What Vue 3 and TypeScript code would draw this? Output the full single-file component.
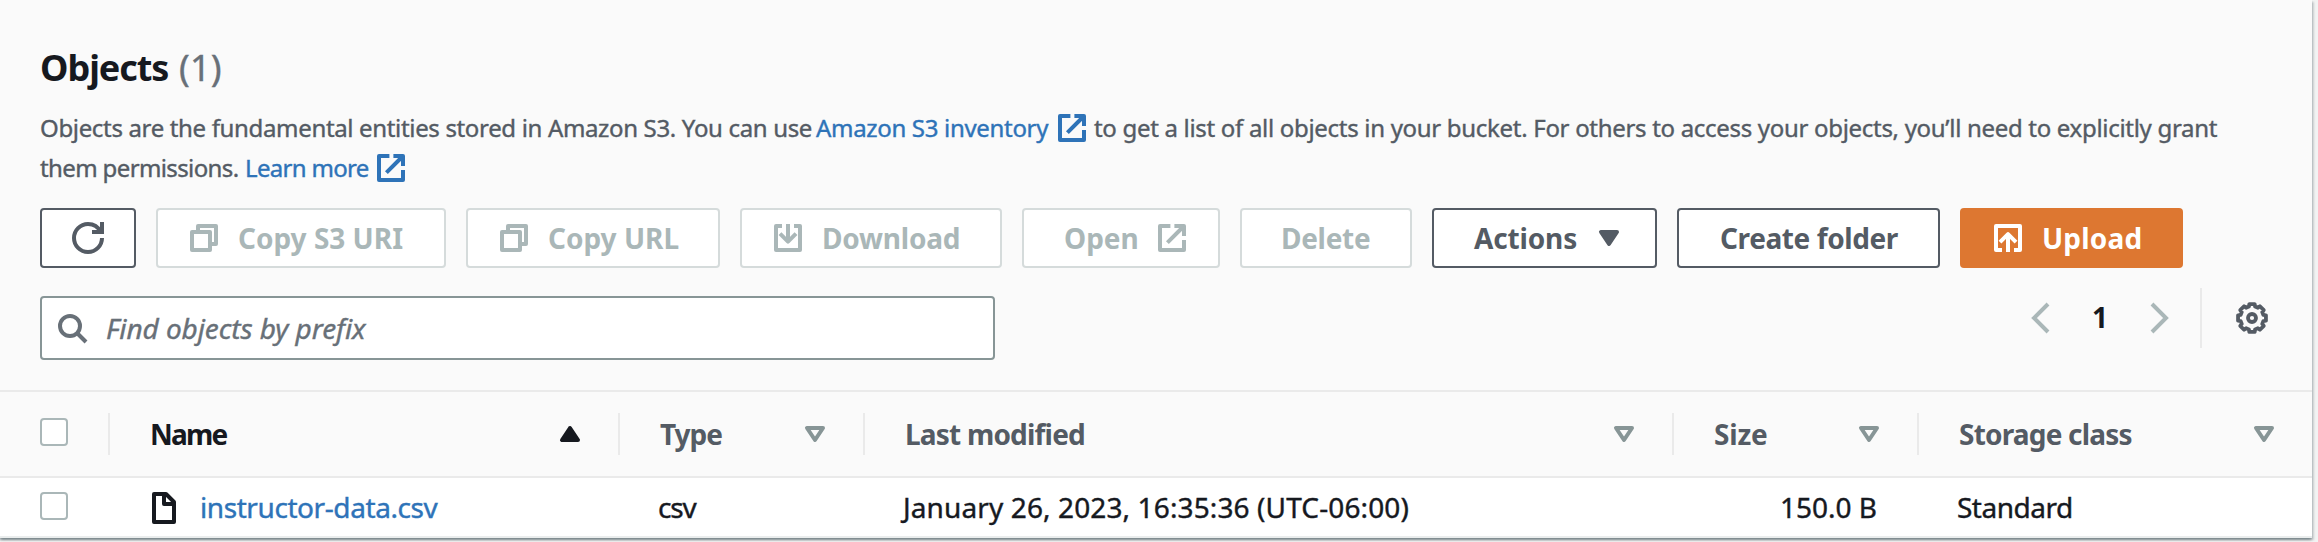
<script setup lang="ts">
interface ActionButton {
  id: string
  label: string
  icon?: string
  iconEnd?: string
  disabled?: boolean
  primary?: boolean
}

interface Column {
  id: string
  label: string
  sorted?: boolean
}

const buttons: ActionButton[] = [
  { id: 'copy-uri', label: 'Copy S3 URI', icon: 'copy', disabled: true },
  { id: 'copy-url', label: 'Copy URL', icon: 'copy', disabled: true },
  { id: 'download', label: 'Download', icon: 'download', disabled: true },
  { id: 'open', label: 'Open', iconEnd: 'external', disabled: true },
  { id: 'delete', label: 'Delete', disabled: true },
  { id: 'menu', label: 'Actions', iconEnd: 'caret' },
  { id: 'create', label: 'Create folder' },
  { id: 'upload', label: 'Upload', icon: 'upload', primary: true },
]

const columns: Column[] = [
  { id: 'name', label: 'Name', sorted: true },
  { id: 'type', label: 'Type' },
  { id: 'modified', label: 'Last modified' },
  { id: 'size', label: 'Size' },
  { id: 'storage', label: 'Storage class' },
]

const rows = [
  {
    name: 'instructor-data.csv',
    type: 'csv',
    modified: 'January 26, 2023, 16:35:36 (UTC-06:00)',
    size: '150.0 B',
    storage: 'Standard',
  },
]

// Stroked 16x16 icon outlines
const icons: Record<string, string> = {
  external: 'M9.2 2H14V7M5.7 10.3L14 2M14 9v5H2V2h5.2',
  copy: 'M2 5h9v9H2zM5 5V2h9v9h-3',
  download: 'M5 2H2v12h12V2h-3M8 1v8.5M4 5.8l4 4 4-4',
  upload: 'M5 14H2V2h12v12h-3M8 15V6.5M4 10.1l4-4 4 4',
}

// Eight-toothed gear outline
const gear = (() => {
  const steps: [number, number][] = [[-11, 7.1], [11, 7.1], [15, 5.9], [30, 5.9]]
  const pts: string[] = []
  for (let t = 0; t < 8; t++) {
    for (const [offset, radius] of steps) {
      const a = ((t * 45 + offset) * Math.PI) / 180
      pts.push(`${(8 + radius * Math.cos(a)).toFixed(2)} ${(8 + radius * Math.sin(a)).toFixed(2)}`)
    }
  }
  return `M${pts.join('L')}Z`
})()
</script>

<template>
  <section class="panel">
    <header class="head">
      <h2 class="title"><span class="title-text">Objects</span><span class="count">(1)</span></h2>
      <p class="desc">
        <span class="d-intro">Objects are the fundamental entities stored in Amazon S3. You can use</span>
        <a class="link d-inv">Amazon S3 inventory</a>
        <svg class="icon" viewBox="0 0 16 16"><path :d="icons.external" /></svg>
        <span class="d-rest">to get a list of all objects in your bucket. For others to access your objects, you’ll need to explicitly grant</span>
      </p>
      <p class="desc">
        <span class="d-perm">them permissions.</span>
        <a class="link d-more">Learn more</a>
        <svg class="icon" viewBox="0 0 16 16"><path :d="icons.external" /></svg>
      </p>

      <div class="actions">
        <button class="btn refresh" aria-label="Refresh">
          <svg class="icon miter" viewBox="0 0 16 16">
            <path d="M15 8c0 3.87-3.13 7-7 7s-7-3.13-7-7 3.13-7 7-7c2.79 0 5.2 1.63 6.33 4" />
            <path d="M10 5h5V0" />
          </svg>
        </button>
        <button
          v-for="b in buttons"
          :key="b.id"
          class="btn"
          :class="[b.id, { disabled: b.disabled, primary: b.primary }]"
        >
          <svg v-if="b.icon" class="icon" viewBox="0 0 16 16"><path :d="icons[b.icon]" /></svg>
          <span class="label">{{ b.label }}</span>
          <svg v-if="b.iconEnd === 'external'" class="icon" viewBox="0 0 16 16"><path :d="icons.external" /></svg>
          <svg v-else-if="b.iconEnd" class="icon solid" viewBox="0 0 16 16"><path d="M4 5h8l-4 6z" /></svg>
        </button>
      </div>

      <div class="tools">
        <div class="search">
          <svg class="icon miter" viewBox="0 0 16 16"><circle cx="7" cy="7" r="5" /><path d="M15 15l-4.5-4.5" /></svg>
          <span class="placeholder">Find objects by prefix</span>
        </div>
        <div class="pager">
          <svg class="icon miter arrow" viewBox="0 0 16 16"><path d="M12 1L5 8l7 7" /></svg>
          <span class="page">1</span>
          <svg class="icon miter arrow" viewBox="0 0 16 16"><path d="M4 1l7 7-7 7" /></svg>
          <span class="rule"></span>
          <svg class="icon settings" viewBox="0 0 16 16"><path :d="gear" /><circle cx="8" cy="8" r="2" /></svg>
        </div>
      </div>
    </header>

    <div class="grid thead">
      <div class="check"><span class="box"></span></div>
      <div v-for="c in columns" :key="c.id" class="th" :class="[c.id, { sorted: c.sorted }]">
        <span class="label">{{ c.label }}</span>
        <svg v-if="c.sorted" class="icon solid" viewBox="0 0 16 16"><path d="M4 11h8L8 5z" /></svg>
        <svg v-else class="icon sort" viewBox="0 0 16 16"><path d="M4 5h8l-4 6z" /></svg>
      </div>
    </div>

    <div v-for="r in rows" :key="r.name" class="grid row">
      <div class="check"><span class="box"></span></div>
      <div class="td">
        <svg class="icon file" viewBox="0 0 16 16"><path d="M8 1v5h5M13 15H3V1h6l4 4v10z" /></svg>
        <a class="link filename">{{ r.name }}</a>
      </div>
      <div class="td c-type">{{ r.type }}</div>
      <div class="td c-modified">{{ r.modified }}</div>
      <div class="td c-size">{{ r.size }}</div>
      <div class="td c-storage">{{ r.storage }}</div>
    </div>
  </section>
</template>

<style>
body {
  background: #f2f3f3;
  overflow: hidden;
}
#app {
  height: 542px;
}
</style>

<style scoped>
.panel {
  box-sizing: border-box;
  width: 2312px;
  height: 538px;
  background: #fff;
  color: #16191f;
  font: 400 28px/36px "Noto Sans", "Open Sans", sans-serif;
  white-space: nowrap;
  border-bottom: 2px solid #eaeded;
  box-shadow: 0 2px 2px rgba(0, 28, 36, 0.3), 2px 2px 2px rgba(0, 28, 36, 0.15), -2px 2px 2px rgba(0, 28, 36, 0.15);
}
.head {
  box-sizing: border-box;
  height: 392px;
  padding: 46px 40px 0;
  background: #fafafa;
  border-bottom: 2px solid #eaeaea;
}
.title {
  display: flex;
  margin: 0 0 18px;
  font-size: 36px;
  line-height: 44px;
}
.title-text {
  width: 139px;
  letter-spacing: -1.05px;
}
.count {
  font-weight: 400;
  color: #687078;
  letter-spacing: 0.2px;
}
.desc,
.count,
.placeholder,
.td {
  -webkit-text-stroke: 0.4px currentColor;
}
.desc {
  display: flex;
  align-items: center;
  height: 40px;
  margin: 0;
  font-size: 24px;
  line-height: 40px;
  color: #545b64;
}
.icon {
  flex: none;
  width: 32px;
  height: 32px;
  fill: none;
  stroke: currentColor;
  stroke-width: 2;
  stroke-linejoin: round;
}
.icon.miter {
  stroke-linejoin: miter;
}
.icon.solid {
  fill: currentColor;
}
.link,
.desc .icon {
  color: #2e73b8;
}
.d-intro {
  width: 776px;
  letter-spacing: -0.34px;
}
.d-inv {
  width: 240px;
  letter-spacing: -0.32px;
}
.d-rest {
  margin-left: 6px;
  letter-spacing: -0.305px;
}
.d-perm {
  width: 205px;
  letter-spacing: -0.62px;
}
.d-more {
  width: 130px;
  letter-spacing: -0.68px;
}
.actions {
  display: flex;
  gap: 20px;
  margin-top: 20px;
}
.btn {
  display: flex;
  align-items: center;
  box-sizing: border-box;
  height: 60px;
  margin: 0;
  padding: 0 0 0 30px;
  border: 2px solid #545b64;
  border-radius: 4px;
  background: #fff;
  color: #545b64;
  font: 700 28px/36px "Noto Sans", "Open Sans", sans-serif;
  text-align: left;
}
.btn .icon + .label {
  margin-left: 18px;
}
.btn.disabled {
  border-color: #d5dbdb;
  color: #aab7b8;
}
.btn.primary {
  border-color: #dd7731;
  background: #dd7731;
  color: #fff;
}
.refresh {
  width: 96px;
}
.copy-uri {
  width: 290px;
}
.copy-url {
  width: 254px;
}
.download {
  width: 262px;
  letter-spacing: -0.2px;
}
.open {
  width: 198px;
  padding-left: 40px;
}
.open .label {
  width: 92px;
}
.delete {
  width: 172px;
  padding-left: 39px;
  letter-spacing: -0.3px;
}
.menu {
  width: 225px;
  padding-left: 40px;
  letter-spacing: -0.15px;
}
.menu .label {
  width: 119px;
}
.create {
  width: 263px;
  padding-left: 41px;
  letter-spacing: -0.4px;
}
.upload {
  width: 223px;
}
.upload .label {
  letter-spacing: 0.2px;
}
.tools {
  display: flex;
  justify-content: space-between;
  margin-top: 28px;
}
.search {
  display: flex;
  align-items: center;
  box-sizing: border-box;
  width: 955px;
  height: 64px;
  padding-left: 14px;
  border: 2px solid #879596;
  border-radius: 4px;
  background: #fff;
  color: #687078;
}
.placeholder {
  margin-left: 18px;
  font-style: italic;
  letter-spacing: -0.08px;
}
.pager {
  display: flex;
  align-items: center;
  height: 60px;
  margin: -8px 4px 0 0;
  color: #545b64;
}
.arrow {
  color: #aab7b8;
}
.page {
  width: 88px;
  text-align: center;
  font-weight: 700;
  color: #16191f;
  margin-top: -2px;
}
.rule {
  width: 2px;
  height: 60px;
  margin: 0 34px 0 24px;
  background: #eaeaea;
}
.settings {
  stroke-width: 1.9;
}
.grid {
  display: grid;
  grid-template-columns: 108px 510px 245px 809px 245px 395px;
}
.thead {
  box-sizing: border-box;
  height: 86px;
  align-items: center;
  background: #fafafa;
  border-bottom: 2px solid #eaeaea;
}
.check {
  padding-left: 40px;
}
.box {
  display: block;
  box-sizing: border-box;
  width: 28px;
  height: 28px;
  border: 2px solid #aab7b8;
  border-radius: 4px;
  background: #fff;
}
.thead .check {
  margin-top: -4px;
}
.th {
  display: flex;
  align-items: center;
  justify-content: space-between;
  box-sizing: border-box;
  height: 42px;
  padding: 0 32px 0 40px;
  border-left: 2px solid #eaeaea;
  font-weight: 700;
  color: #545b64;
}
.th.name {
  letter-spacing: -1.8px;
}
.th.type {
  letter-spacing: -1px;
}
.th.modified {
  letter-spacing: -0.8px;
}
.th.size {
  letter-spacing: -0.2px;
}
.th.storage {
  letter-spacing: -0.8px;
}
.th .label {
  margin-top: -1px;
}
.th.sorted {
  color: #16191f;
}
.sort {
  color: #879596;
}
.row {
  height: 58px;
  align-items: center;
}
.row .check {
  margin-top: -2px;
}
.td {
  display: flex;
  align-items: center;
  padding-left: 40px;
}
.file {
  margin-top: 2px;
}
.filename {
  margin-left: 20px;
  letter-spacing: -0.42px;
}
.c-type {
  letter-spacing: -1.2px;
}
.c-modified {
  letter-spacing: 0.12px;
}
.c-size {
  justify-content: flex-end;
  padding-right: 40px;
}
.c-storage {
  letter-spacing: -0.5px;
}
</style>
